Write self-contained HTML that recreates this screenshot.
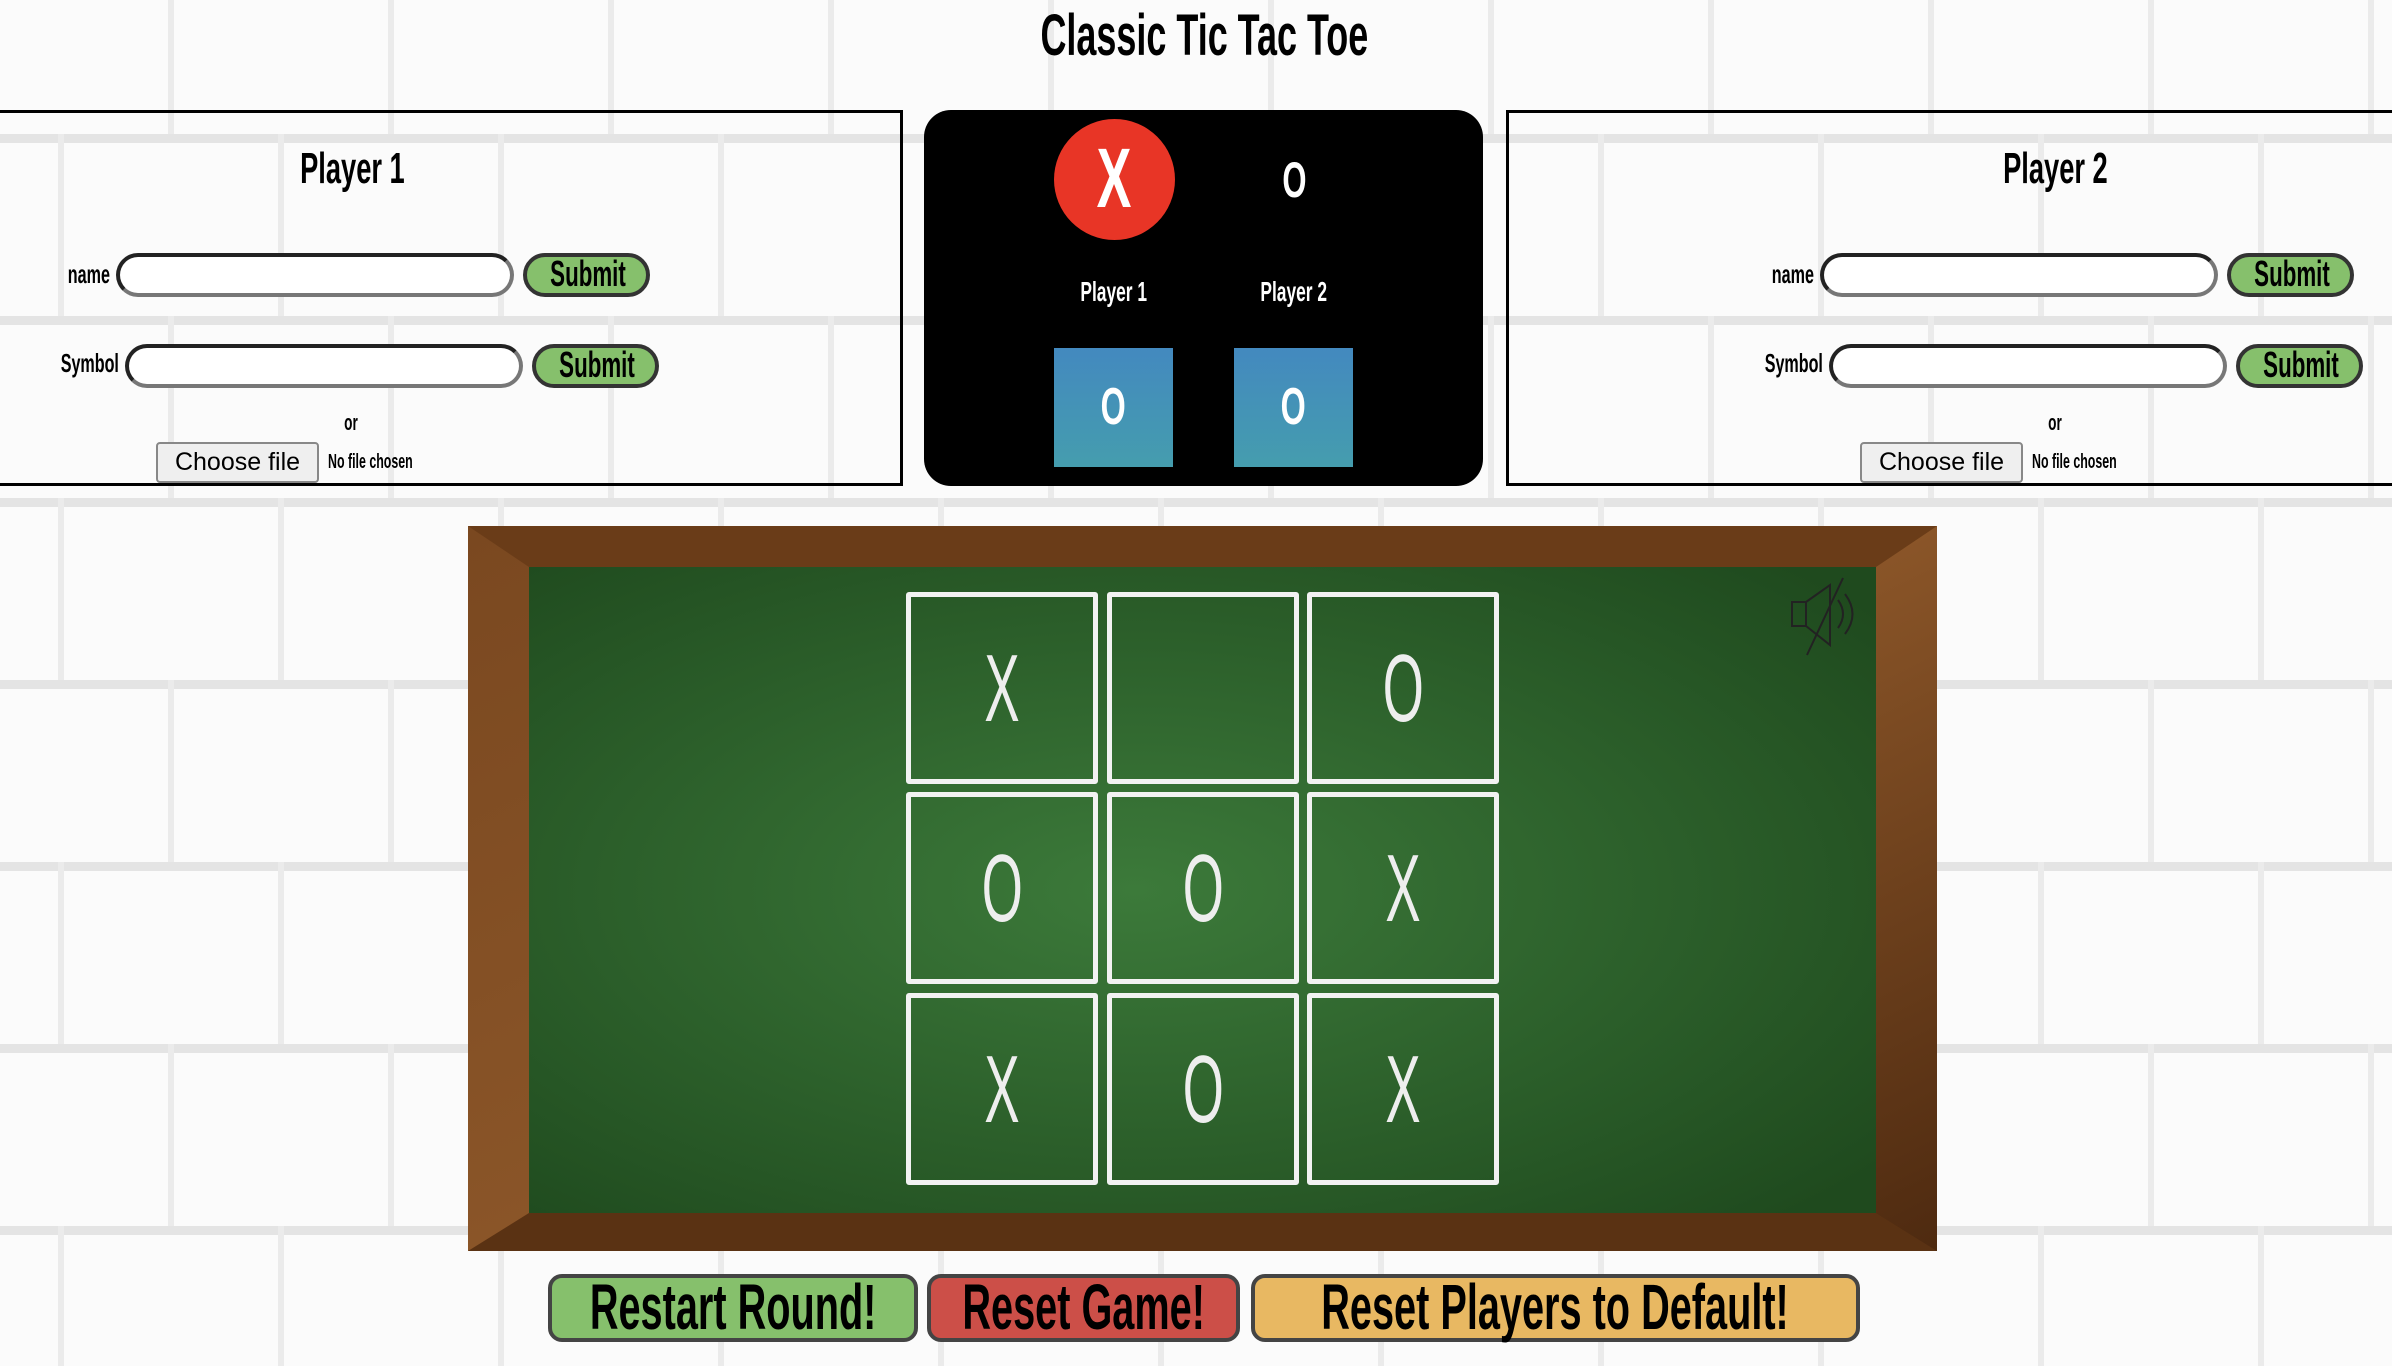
<!DOCTYPE html>
<html><head><meta charset="utf-8"><style>
*{box-sizing:border-box;margin:0;padding:0}
body{width:2392px;height:1366px;overflow:hidden;position:relative;background:#fbfbfb;font-family:"Liberation Sans",sans-serif;font-weight:bold}
.bg{position:absolute;left:0;top:0}
.abs{position:absolute}
.hand{font-family:"Liberation Sans",sans-serif;font-weight:bold;white-space:nowrap}
.n{display:inline-block;transform:scaleX(.62);transform-origin:center}
.nl{display:inline-block;transform:scaleX(.62);transform-origin:left}
.nr{display:inline-block;transform:scaleX(.62);transform-origin:right}
.panel{position:absolute;top:110px;height:376px;border:3px solid #000}
.inp{position:absolute;height:44px;border:4px solid #222;border-bottom-color:#777;border-right-color:#777;border-radius:22px;background:#fff}
.sub{position:absolute;height:44px;border:4px solid #333;border-radius:22px;background:#86c06c;font-size:36px;text-align:center;line-height:34px;color:#000}
.lbl{position:absolute;font-size:26px;color:#000;text-align:right}
.cf{position:absolute;width:163px;height:41px;background:#efefef;border:2px solid #888;border-radius:4px;font-family:"Liberation Sans",sans-serif;font-weight:normal;font-size:25px;text-align:center;line-height:37px}
.cell{position:absolute;width:192px;height:192px;border:5px solid #f2f2f2;border-radius:3px}
.cell span{position:absolute;left:0;right:0;top:42px;text-align:center;font-family:"Liberation Sans",sans-serif;font-weight:normal;font-size:96px;color:#eee;line-height:100px}
.cell span i{font-style:normal;display:inline-block;transform:scaleX(.55)}
.btn{position:absolute;top:1274px;height:68px;border:4px solid #444;border-radius:14px;font-size:64px;line-height:58px;color:#000;display:flex;justify-content:center}
.btn span{flex-shrink:0}
</style></head><body>
<svg class="bg" width="2392" height="1366">
<defs><pattern id="b" width="440" height="364" patternUnits="userSpaceOnUse" y="-48" x="-52">
<rect width="440" height="364" fill="#fbfbfb"/>
<rect y="0" width="440" height="9" fill="#e4e4e4"/>
<rect y="182" width="440" height="9" fill="#e4e4e4"/>
<rect x="0" y="0" width="6" height="182" fill="#ebebeb"/>
<rect x="220" y="0" width="6" height="182" fill="#ebebeb"/>
<rect x="110" y="182" width="6" height="182" fill="#ebebeb"/>
<rect x="330" y="182" width="6" height="182" fill="#ebebeb"/>
</pattern>
<radialGradient id="g" cx="0.45" cy="0.5" r="0.7"><stop offset="0" stop-color="#3c7a3a"/><stop offset="1" stop-color="#1f4a1e"/></radialGradient>
<linearGradient id="w" x1="0" y1="0" x2="1" y2="1"><stop offset="0" stop-color="#7a4820"/><stop offset="0.5" stop-color="#8a5528"/><stop offset="1" stop-color="#4e2a10"/></linearGradient>
</defs>
<rect width="2392" height="1366" fill="url(#b)"/>
<rect x="468" y="526" width="1469" height="725" fill="url(#w)"/>
<polygon points="468,526 1937,526 1876,567 529,567" fill="#6a3c18"/>
<polygon points="468,1251 1937,1251 1876,1213 529,1213" fill="#5a3213"/>
<rect x="529" y="567" width="1347" height="646" fill="url(#g)"/>
<g stroke="#222" stroke-width="2" fill="none">
<rect x="1792" y="602" width="14" height="24"/><path d="M1806 602 L1830 585 L1830 645 L1806 626"/>
<path d="M1838 600 Q1848 614 1838 628 M1845 594 Q1860 614 1845 634 M1807 655 L1843 578"/>
</g>
</svg>
<div class="abs hand" style="left:0;width:2408px;top:2px;text-align:center;font-size:58px"><span class="n">Classic Tic Tac Toe</span></div>

<div class="panel" style="left:-3px;width:906px"></div>
<div class="abs hand" style="left:152px;width:400px;top:144px;text-align:center;font-size:44px"><span class="n">Player 1</span></div>
<div class="lbl hand" style="left:0;width:110px;top:259px"><span class="nr">name</span></div>
<div class="inp" style="left:116px;top:253px;width:398px"></div>
<div class="sub hand" style="left:523px;top:253px;width:127px"><span class="n">Submit</span></div>
<div class="lbl hand" style="left:0;width:119px;top:348px"><span class="nr">Symbol</span></div>
<div class="inp" style="left:125px;top:344px;width:398px"></div>
<div class="sub hand" style="left:532px;top:344px;width:127px"><span class="n">Submit</span></div>
<div class="lbl hand" style="left:321px;width:60px;text-align:center;top:410px;font-size:22px"><span class="n">or</span></div>
<div class="cf" style="left:156px;top:442px">Choose file</div>
<div class="lbl hand" style="left:328px;text-align:left;top:451px;font-size:20px"><span class="nl">No file chosen</span></div>

<div class="abs" style="left:924px;top:110px;width:559px;height:376px;background:#000;border-radius:27px">
 <div class="abs" style="left:130px;top:9px;width:121px;height:121px;border-radius:50%;background:#e83526;color:#fff;font-size:84px;text-align:center;line-height:118px"><span class="n">X</span></div>
 <div class="abs" style="left:330px;top:40px;width:80px;text-align:center;color:#fff;font-size:50px;line-height:60px"><span class="n">O</span></div>
 <div class="abs hand" style="left:100px;width:180px;top:166px;text-align:center;color:#fff;font-size:28px"><span class="n">Player 1</span></div>
 <div class="abs hand" style="left:280px;width:180px;top:166px;text-align:center;color:#fff;font-size:28px"><span class="n">Player 2</span></div>
 <div class="abs" style="left:130px;top:238px;width:119px;height:119px;background:linear-gradient(#4389bf,#459dae);color:#fff;font-size:52px;text-align:center;line-height:119px"><span class="n">O</span></div>
 <div class="abs" style="left:310px;top:238px;width:119px;height:119px;background:linear-gradient(#4389bf,#459dae);color:#fff;font-size:52px;text-align:center;line-height:119px"><span class="n">O</span></div>
</div>

<div class="panel" style="left:1506px;width:900px"></div>
<div class="abs hand" style="left:1855px;width:400px;top:144px;text-align:center;font-size:44px"><span class="n">Player 2</span></div>
<div class="lbl hand" style="left:1700px;width:114px;top:259px"><span class="nr">name</span></div>
<div class="inp" style="left:1820px;top:253px;width:398px"></div>
<div class="sub hand" style="left:2227px;top:253px;width:127px"><span class="n">Submit</span></div>
<div class="lbl hand" style="left:1700px;width:123px;top:348px"><span class="nr">Symbol</span></div>
<div class="inp" style="left:1829px;top:344px;width:398px"></div>
<div class="sub hand" style="left:2236px;top:344px;width:127px"><span class="n">Submit</span></div>
<div class="lbl hand" style="left:2025px;width:60px;text-align:center;top:410px;font-size:22px"><span class="n">or</span></div>
<div class="cf" style="left:1860px;top:442px">Choose file</div>
<div class="lbl hand" style="left:2032px;text-align:left;top:451px;font-size:20px"><span class="nl">No file chosen</span></div>

<div class="cell" style="left:906px;top:592px"><span><i>X</i></span></div>
<div class="cell" style="left:1107px;top:592px"></div>
<div class="cell" style="left:1307px;top:592px"><span><i>O</i></span></div>
<div class="cell" style="left:906px;top:792px"><span><i>O</i></span></div>
<div class="cell" style="left:1107px;top:792px"><span><i>O</i></span></div>
<div class="cell" style="left:1307px;top:792px"><span><i>X</i></span></div>
<div class="cell" style="left:906px;top:993px"><span><i>X</i></span></div>
<div class="cell" style="left:1107px;top:993px"><span><i>O</i></span></div>
<div class="cell" style="left:1307px;top:993px"><span><i>X</i></span></div>

<div class="btn hand" style="left:548px;width:370px;background:#86c06c"><span class="n">Restart Round!</span></div>
<div class="btn hand" style="left:927px;width:313px;background:#cc4f48"><span class="n">Reset Game!</span></div>
<div class="btn hand" style="left:1251px;width:609px;background:#e8b862"><span class="n">Reset Players to Default!</span></div>
</body></html>
